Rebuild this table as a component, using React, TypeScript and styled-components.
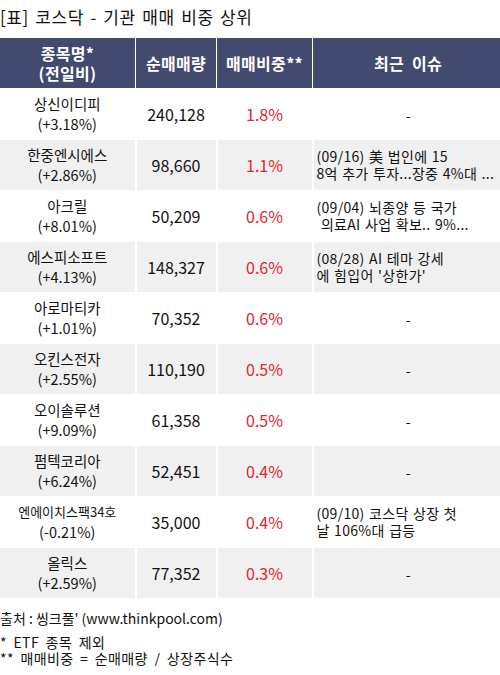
import styled, { createGlobalStyle } from 'styled-components';

const GlobalStyle = createGlobalStyle`
  body {
    margin: 0;
    background: #fff;
    font-family: "Noto Sans CJK KR", "Noto Sans", sans-serif;
    color: #111;
  }
`;

type Row = { name: string; change: string; qty: string; ratio: string; issue: string[]; small?: boolean };

const rows: Row[] = [
  { name: '상신이디피', change: '(+3.18%)', qty: '240,128', ratio: '1.8%', issue: [] },
  { name: '한중엔시에스', change: '(+2.86%)', qty: '98,660', ratio: '1.1%', issue: ['(09/16) 美 법인에 15', '8억 추가 투자...장중 4%대 ...'] },
  { name: '아크릴', change: '(+8.01%)', qty: '50,209', ratio: '0.6%', issue: ['(09/04) 뇌종양 등 국가', ' 의료AI 사업 확보.. 9%...'] },
  { name: '에스피소프트', change: '(+4.13%)', qty: '148,327', ratio: '0.6%', issue: ['(08/28) AI 테마 강세', "에 힘입어 '상한가'"] },
  { name: '아로마티카', change: '(+1.01%)', qty: '70,352', ratio: '0.6%', issue: [] },
  { name: '오킨스전자', change: '(+2.55%)', qty: '110,190', ratio: '0.5%', issue: [] },
  { name: '오이솔루션', change: '(+9.09%)', qty: '61,358', ratio: '0.5%', issue: [] },
  { name: '펌텍코리아', change: '(+6.24%)', qty: '52,451', ratio: '0.4%', issue: [] },
  { name: '엔에이치스팩34호', change: '(-0.21%)', qty: '35,000', ratio: '0.4%', issue: ['(09/10) 코스닥 상장 첫', '날 106%대 급등'], small: true },
  { name: '올릭스', change: '(+2.59%)', qty: '77,352', ratio: '0.3%', issue: [] },
];

const Title = styled.h1`
  margin: 0;
  padding: 6px 0 0 0;
  height: 32px;
  box-sizing: border-box;
  font-size: 17px;
  font-weight: 400;
  line-height: 22px;
  letter-spacing: 0.6px;
  word-spacing: 2px;
  color: #111;
`;

const Table = styled.table`
  width: 500px;
  border-collapse: collapse;
  table-layout: fixed;
  margin-top: 6px;
`;

const Head = styled.th<{ $w: number }>`
  width: ${p => p.$w}px;
  height: 50px;
  padding: 0;
  background: #424a70;
  color: #fff;
  font-size: 16px;
  font-weight: 700;
  line-height: 20px;
  letter-spacing: 0.3px;
  word-spacing: 4px;
  text-align: center;
  border-right: 1px solid #fff;
  &:last-child { border-right: none; }
`;

const BodyRow = styled.tr<{ $gray: boolean }>`
  background: ${p => (p.$gray ? '#f0f0f0' : '#fff')};
  border-top: 1px solid #fff;
`;

const Cell = styled.td`
  height: 50px;
  padding: 0;
  text-align: center;
  vertical-align: middle;
  border-right: 2px solid #fff;
  &:last-child { border-right: none; }
`;

const Name = styled.div<{ $small?: boolean }>`
  font-size: ${p => (p.$small ? '13px' : '14.5px')};
  line-height: 20px;
  color: #111;
`;

const Qty = styled.span`
  font-size: 16px;
  color: #111;
`;

const Ratio = styled.span`
  font-size: 16px;
  color: #e0262e;
`;

const Issue = styled.div`
  text-align: left;
  padding-left: 3px;
  font-size: 14px;
  line-height: 17px;
  letter-spacing: 0.3px;
  word-spacing: 1px;
  white-space: pre;
  color: #111;
`;

const Dash = styled.span`
  font-size: 14px;
  color: #111;
`;

const Footer = styled.div`
  padding-top: 9px;
  font-size: 14px;
  color: #111;
`;

const Source = styled.div`
  line-height: 22px;
  margin-bottom: 5px;
`;

const Note = styled.div`
  line-height: 16px;
  letter-spacing: 0.4px;
  word-spacing: 3px;
`;

export default function App() {
  return (
    <>
      <GlobalStyle />
      <Title>[표] 코스닥 - 기관 매매 비중 상위</Title>
      <Table>
        <thead>
          <tr>
            <Head $w={135}>종목명*<br />(전일비)</Head>
            <Head $w={80}>순매매량</Head>
            <Head $w={95}>매매비중**</Head>
            <Head $w={190}>최근 이슈</Head>
          </tr>
        </thead>
        <tbody>
          {rows.map((r, i) => (
            <BodyRow key={r.name} $gray={i % 2 === 1}>
              <Cell>
                <Name $small={r.small}>{r.name}</Name>
                <Name>{r.change}</Name>
              </Cell>
              <Cell><Qty>{r.qty}</Qty></Cell>
              <Cell><Ratio>{r.ratio}</Ratio></Cell>
              <Cell>
                {r.issue.length ? (
                  <Issue>{r.issue.map(l => <div key={l}>{l}</div>)}</Issue>
                ) : (
                  <Dash>-</Dash>
                )}
              </Cell>
            </BodyRow>
          ))}
        </tbody>
      </Table>
      <Footer>
        <Source>출처 : 씽크풀' (www.thinkpool.com)</Source>
        <Note>* ETF 종목 제외</Note>
        <Note>** 매매비중 = 순매매량 / 상장주식수</Note>
      </Footer>
    </>
  );
}
